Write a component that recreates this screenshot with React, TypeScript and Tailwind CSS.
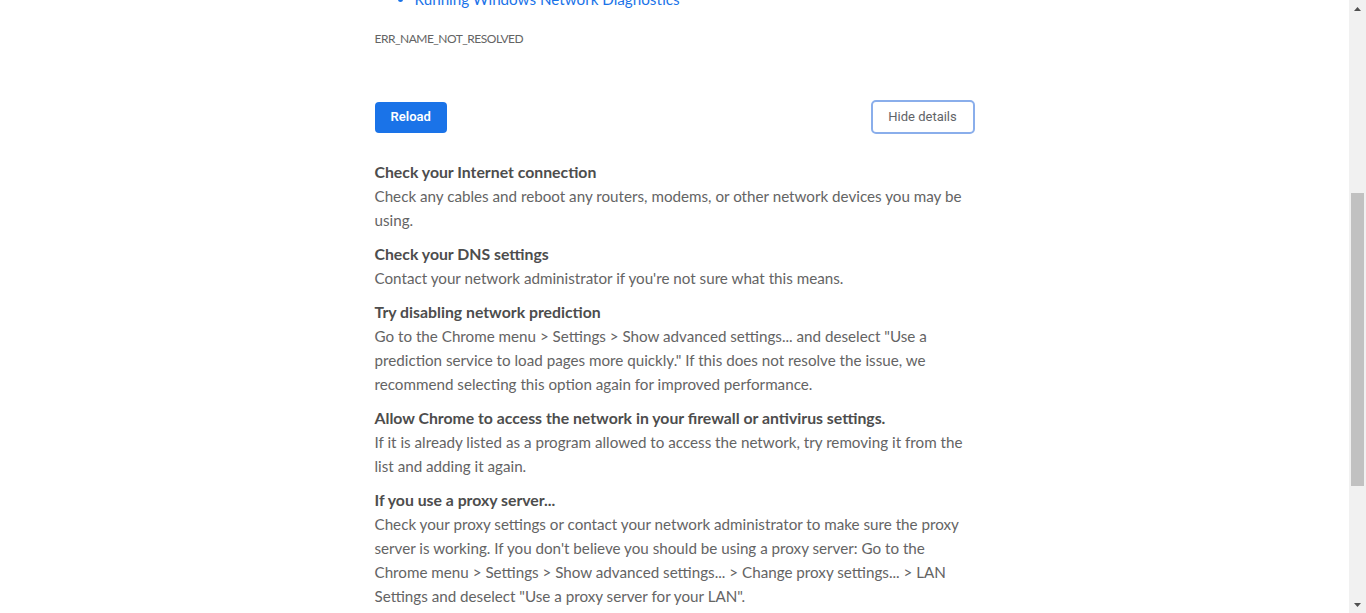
import React from 'react';

const sections = [
  {
    title: 'Check your Internet connection',
    lines: ['Check any cables and reboot any routers, modems, or other network devices you may be', 'using.'],
  },
  {
    title: 'Check your DNS settings',
    lines: ["Contact your network administrator if you're not sure what this means."],
  },
  {
    title: 'Try disabling network prediction',
    lines: [
      'Go to the Chrome menu > Settings > Show advanced settings... and deselect "Use a',
      'prediction service to load pages more quickly." If this does not resolve the issue, we',
      'recommend selecting this option again for improved performance.',
    ],
  },
  {
    title: 'Allow Chrome to access the network in your firewall or antivirus settings.',
    lines: [
      'If it is already listed as a program allowed to access the network, try removing it from the',
      'list and adding it again.',
    ],
  },
  {
    title: 'If you use a proxy server...',
    lines: [
      'Check your proxy settings or contact your network administrator to make sure the proxy',
      "server is working. If you don't believe you should be using a proxy server: Go to the",
      'Chrome menu > Settings > Show advanced settings... > Change proxy settings... > LAN',
      'Settings and deselect "Use a proxy server for your LAN".',
    ],
  },
];

function Scrollbar() {
  return (
    <div className="w-[17px] h-screen bg-[#f1f1f1] flex flex-col items-center shrink-0">
      <div className="h-[17px] flex items-center justify-center">
        <svg width="7" height="4" viewBox="0 0 7 4"><path d="M3.5 0L7 4H0z" fill="#505050" /></svg>
      </div>
      <div className="h-[176px]" />
      <div className="w-[13px] h-[293px] bg-[#c1c1c1]" />
      <div className="flex-1" />
      <div className="h-[17px] flex items-center justify-center">
        <svg width="7" height="4" viewBox="0 0 7 4"><path d="M0 0H7L3.5 4z" fill="#505050" /></svg>
      </div>
    </div>
  );
}

export default function App() {
  return (
    <div className="flex h-screen overflow-hidden bg-white">
      <div className="flex-1 overflow-hidden">
        <div className="mx-auto w-[600px] -mt-[13px] text-[15.2px] leading-6 text-[#646464] font-['Lato',sans-serif]">
          <ul className="list-disc pl-10 text-[#1a73e8]">
            <li>Running Windows Network Diagnostics</li>
          </ul>
          <div className="mt-[18px] text-[12px] leading-5 tracking-[-0.5px] uppercase">ERR_NAME_NOT_RESOLVED</div>

          {/* buttons */}
          <div className="mt-[51px] flex items-center justify-between font-['Roboto',sans-serif] text-[13px]">
            <button className="h-[31px] px-4 rounded-[4px] bg-[#1a73e8] text-white font-semibold">Reload</button>
            <button className="h-[34px] w-[104px] rounded-[5px] border-2 border-[#8aaeeb] bg-white text-[#5f6368]">
              Hide details
            </button>
          </div>

          <div className="mt-[26px] flex flex-col gap-[10px]">
            {sections.map((s) => (
              <div key={s.title}>
                <div className="font-bold text-[15.8px] text-[#4d4d4d]">{s.title}</div>
                {s.lines.map((l) => (
                  <span key={l} className="block whitespace-nowrap">{l}</span>
                ))}
              </div>
            ))}
          </div>
        </div>
      </div>
      <Scrollbar />
    </div>
  );
}
